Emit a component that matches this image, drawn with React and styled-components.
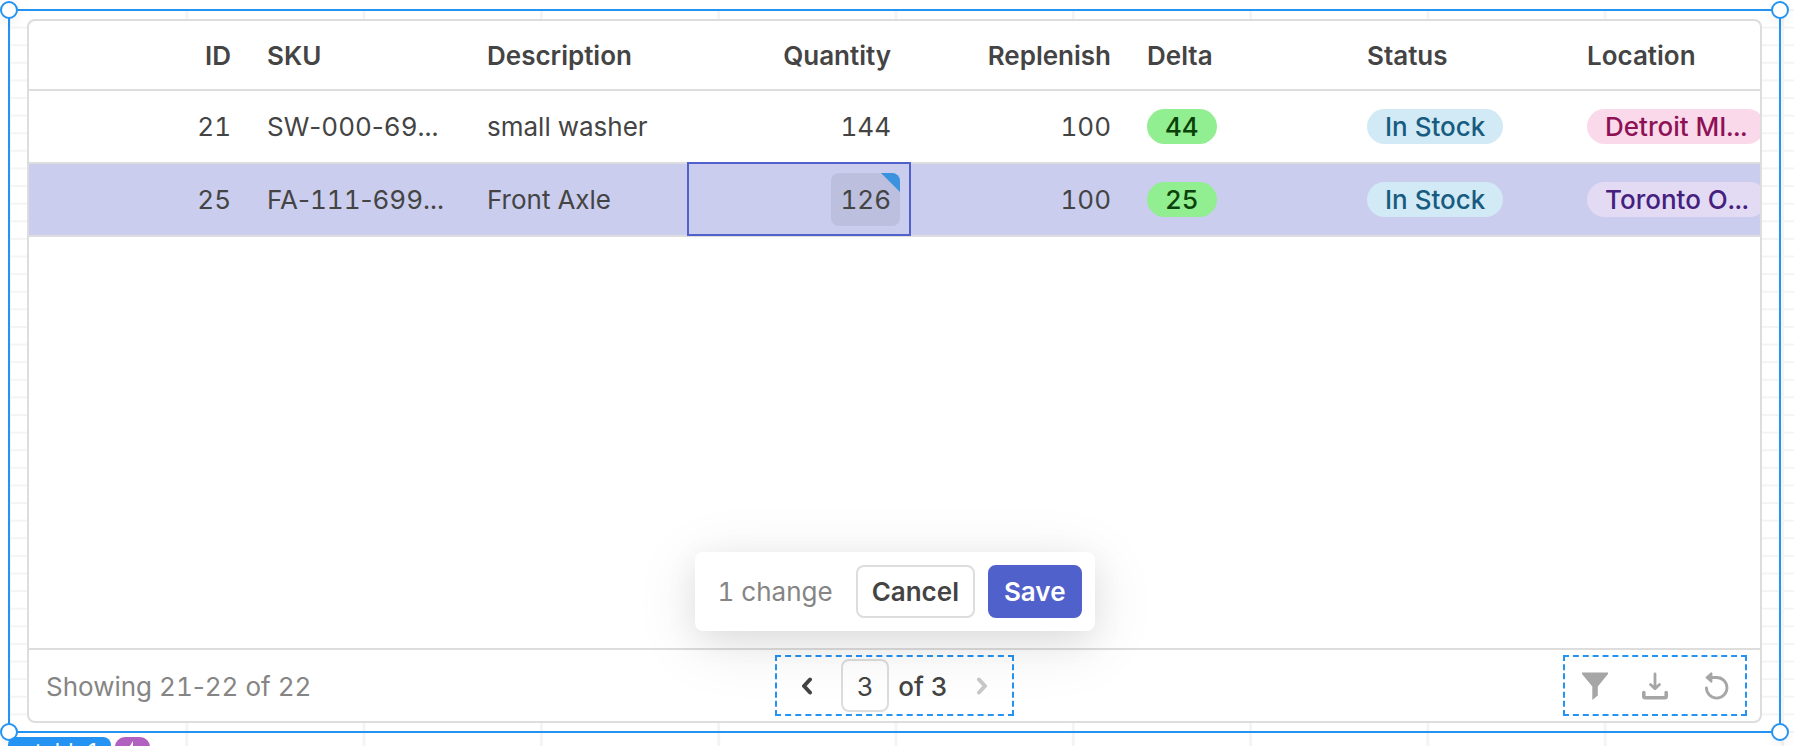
import React, { useState } from 'react';
import styled, { createGlobalStyle } from 'styled-components';

const GlobalStyle = createGlobalStyle`
    *, *::before, *::after {
        box-sizing: border-box;
    }
    body {
        margin: 0;
        overflow: hidden;
        background: #fff;
        color: #444;
        font-family: Inter, 'Liberation Sans', sans-serif;
        font-size: 26px;
        line-height: 36px;
        font-variant-numeric: tabular-nums;
    }
    button, input {
        font: inherit;
        color: inherit;
    }
`;

const Page = styled.main`
    display: flex;
    height: 100vh;
    padding: 9px 0 0 8px;
`;

const Canvas = styled.div`
    position: relative;
    display: flex;
    flex: 1;
    min-width: 0;
    padding: 0 13px 13px 0;
    background-image: linear-gradient(to right, #f4f4f4 3px, transparent 3px),
        linear-gradient(to bottom, #f4f4f4 2px, transparent 2px);
    background-size: calc((100% - 13px) / 10) 100%, 100% calc((100% - 15px) / 41);
`;

const Selection = styled.div`
    position: relative;
    display: flex;
    flex: 1;
    min-width: 0;
    padding: 8px 17px;
    border: 2px solid #2493f2;
`;

const Handle = styled.span`
    position: absolute;
    ${({ $y }) => $y}: -10px;
    ${({ $x }) => $x}: -10px;
    width: 18px;
    height: 18px;
    border: 2px solid #2493f2;
    border-radius: 50%;
    background: #fff;
    box-shadow: 0 4px 12px rgba(0, 0, 0, 0.06);
`;

const Widget = styled.section`
    position: relative;
    display: flex;
    flex-direction: column;
    flex: 1;
    min-width: 0;
    overflow: hidden;
    background: #fff;
    border: 2px solid #ddd;
    border-radius: 8px;
`;

const TableArea = styled.div`
    flex: 1;
    min-height: 0;
    overflow: hidden;
`;

const Table = styled.table`
    width: max-content;
    min-width: 100%;
    table-layout: fixed;
    border-collapse: separate;
    border-spacing: 0;
`;

const cellAlign = ({ $right }) => ($right ? 'right' : 'left');

const HeadCell = styled.th`
    width: 220px;
    height: 70px;
    padding: 2px 18px 0;
    border-bottom: 2px solid #ddd;
    font-weight: 600;
    text-align: ${cellAlign};
`;

const Row = styled.tr`
    background: ${({ $selected }) => ($selected ? '#cacdee' : '#fff')};
`;

const Cell = styled.td`
    position: relative;
    width: 220px;
    max-width: 220px;
    height: 73px;
    padding: 0 18px;
    border-bottom: 2px solid #ddd;
    text-align: ${cellAlign};
    white-space: nowrap;
`;

const ActiveOutline = styled.span`
    position: absolute;
    inset: -2px -2px -1px;
    z-index: 1;
    border: 2px solid #5161cb;
    pointer-events: none;
`;

const EditedValue = styled.div`
    position: relative;
    width: fit-content;
    margin: 0 -9px 0 auto;
    padding: 9px 9px 8px;
    overflow: hidden;
    background: #bcbfde;
    border-radius: 8px;

    &::after {
        content: '';
        position: absolute;
        top: 0;
        right: 0;
        width: 19px;
        height: 19px;
        background: #3b92de;
        clip-path: polygon(0 0, 100% 0, 100% 100%);
    }
`;

const tagColors = {
    green: ['#91ee91', '#0a420a'],
    blue: ['#d2e9f6', '#175c80'],
    pink: ['#fadaea', '#8e1156'],
    violet: ['#e3daf3', '#44207f'],
};

const Tag = styled.div`
    width: fit-content;
    height: 35px;
    padding: 0 18px;
    line-height: 35px;
    font-weight: 500;
    border-radius: 18px;
    background: ${({ $color }) => tagColors[$color][0]};
    color: ${({ $color }) => tagColors[$color][1]};
`;

const SaveBar = styled.div`
    position: absolute;
    bottom: 90px;
    left: 50%;
    z-index: 1;
    display: flex;
    align-items: center;
    gap: 13px;
    padding: 13px;
    transform: translateX(-50%);
    white-space: nowrap;
    background: #fff;
    border-radius: 8px;
    box-shadow: 0 12px 64px rgba(0, 0, 0, 0.1), 0 8px 32px rgba(0, 0, 0, 0.07);
`;

const ChangeCount = styled.span`
    padding: 0 10px;
    color: #858585;
`;

const Button = styled.button`
    height: 53px;
    padding: 0 14px;
    border: 2px solid ${({ $primary }) => ($primary ? '#5161cb' : '#ddd')};
    border-radius: 8px;
    background: ${({ $primary }) => ($primary ? '#5161cb' : '#fff')};
    color: ${({ $primary }) => ($primary ? '#fff' : '#444')};
    font-weight: 600;
`;

const Footer = styled.footer`
    display: grid;
    grid-template-columns: 1fr auto 1fr;
    align-items: center;
    padding: 5px 13px;
    border-top: 2px solid #ddd;
`;

const RowCount = styled.span`
    padding: 2px 0 0 4px;
    color: #858585;
`;

// Inter gives the hyphen a full digit width under tabular-nums
const Hyphen = styled.span`
    font-variant-numeric: normal;
`;

const DashedGroup = styled.div`
    display: flex;
    align-items: center;
    justify-self: ${({ $end }) => ($end ? 'end' : 'center')};
    height: 61px;
    border: 2px dashed #2493f2;
`;

const IconButton = styled.button`
    display: flex;
    align-items: center;
    justify-content: center;
    height: 53px;
    padding: 0;
    border: 0;
    background: none;
`;

const PageButton = styled(IconButton)`
    width: 64px;
    padding: ${({ $next }) => ($next ? '0 0 0 4px' : '0 4px 0 0')};
    color: ${({ $next }) => ($next ? '#c8c8c8' : '#444')};
`;

const ToolButton = styled(IconButton)`
    width: 60px;
    color: #a6a6a6;
`;

const PageInput = styled.input`
    width: 48px;
    height: 53px;
    padding: 2px 0 0;
    border: 2px solid #ddd;
    border-radius: 8px;
    background: transparent;
    text-align: center;
`;

const PageTotal = styled.span`
    padding: 2px 0 0 9px;
    font-weight: 500;
`;

const Badges = styled.div`
    position: absolute;
    top: calc(100% - 9px);
    left: 0;
    display: flex;
    gap: 4px;
    color: #fff;
    font-size: 22px;
    line-height: 28px;
`;

const NameBadge = styled.span`
    display: flex;
    align-items: center;
    gap: 9px;
    padding: 0 10px 0 9px;
    border-radius: 8px;
    background: #2493f2;
`;

const EventBadge = styled.span`
    display: flex;
    align-items: center;
    justify-content: center;
    width: 35px;
    border-radius: 10px;
    background: #b161bf;
`;

const columns = [
    { label: 'ID', right: true },
    { label: 'SKU' },
    { label: 'Description' },
    { label: 'Quantity', right: true },
    { label: 'Replenish', right: true },
    { label: 'Delta' },
    { label: 'Status' },
    { label: 'Location' },
];

const items = [
    {
        id: 21,
        sku: 'SW-000-69...',
        description: 'small washer',
        quantity: 144,
        replenish: 100,
        delta: 44,
        status: 'In Stock',
        location: 'Detroit MI...',
        locationColor: 'pink',
    },
    {
        id: 25,
        sku: 'FA-111-699...',
        description: 'Front Axle',
        quantity: 126,
        replenish: 100,
        delta: 25,
        status: 'In Stock',
        location: 'Toronto O...',
        locationColor: 'violet',
        edited: true,
    },
];

function Hyphenated({ text }) {
    return text.split('-').map((part, index) => (
        <React.Fragment key={index}>
            {index > 0 && <Hyphen>-</Hyphen>}
            {part}
        </React.Fragment>
    ));
}

function Chevron({ left }) {
    return (
        <svg width="12" height="18" viewBox="0 0 12 18" fill="none" aria-hidden="true">
            <path
                d={left ? 'M9 2.5 3 9l6 6.5' : 'M3 2.5 9 9l-6 6.5'}
                stroke="currentColor"
                strokeWidth="4"
                strokeLinecap="round"
                strokeLinejoin="round"
            />
        </svg>
    );
}

function FilterIcon() {
    return (
        <svg width="26" height="28" viewBox="0 0 26 28" aria-hidden="true">
            <path d="M0 .5h26v1.6L15.800 14.500v9L10.300 28V14.500L0 2.1z" fill="currentColor" />
        </svg>
    );
}

function DownloadIcon() {
    return (
        <svg
            width="26"
            height="28"
            viewBox="0 0 26 28"
            fill="none"
            stroke="currentColor"
            strokeLinecap="round"
            strokeLinejoin="round"
            aria-hidden="true"
        >
            <path d="M13 2v14M8.500 12.500 13 16.800l4.500-4.300" strokeWidth="2.800" />
            <path d="M1.800 20.500v3.700q0 1.500 1.500 1.500h19.400q1.500 0 1.500-1.500v-3.700" strokeWidth="3.600" />
        </svg>
    );
}

function ResetIcon() {
    return (
        <svg width="28" height="28" viewBox="0 0 28 28" fill="none" aria-hidden="true">
            <path
                d="M5.400 15.800A10.300 10.300 0 1 0 15.700 5.500H10"
                stroke="currentColor"
                strokeWidth="2.800"
                strokeLinecap="round"
            />
            <path d="M5.600 5.500 10.400 1.300v8.400z" fill="currentColor" stroke="currentColor" strokeWidth="2" strokeLinejoin="round" />
        </svg>
    );
}

function ItemRow({ item }) {
    return (
        <Row $selected={item.edited}>
            <Cell $right>{item.id}</Cell>
            <Cell>
                <Hyphenated text={item.sku} />
            </Cell>
            <Cell>{item.description}</Cell>
            <Cell $right>
                {item.edited ? <EditedValue>{item.quantity}</EditedValue> : item.quantity}
                {item.edited && <ActiveOutline />}
            </Cell>
            <Cell $right>{item.replenish}</Cell>
            <Cell>
                <Tag $color="green">{item.delta}</Tag>
            </Cell>
            <Cell>
                <Tag $color="blue">{item.status}</Tag>
            </Cell>
            <Cell>
                <Tag $color={item.locationColor}>{item.location}</Tag>
            </Cell>
        </Row>
    );
}

function App() {
    const [page, setPage] = useState('3');

    return (
        <Page>
            <GlobalStyle />
            <Canvas>
                <Selection>
                    <Widget>
                        <TableArea>
                            <Table>
                                <thead>
                                    <tr>
                                        {columns.map((column) => (
                                            <HeadCell key={column.label} $right={column.right}>
                                                {column.label}
                                            </HeadCell>
                                        ))}
                                    </tr>
                                </thead>
                                <tbody>
                                    {items.map((item) => (
                                        <ItemRow key={item.id} item={item} />
                                    ))}
                                </tbody>
                            </Table>
                        </TableArea>
                        <SaveBar>
                            <ChangeCount>1 change</ChangeCount>
                            <Button type="button">Cancel</Button>
                            <Button type="button" $primary>
                                Save
                            </Button>
                        </SaveBar>
                        <Footer>
                            <RowCount>
                                <Hyphenated text="Showing 21-22 of 22" />
                            </RowCount>
                            <DashedGroup>
                                <PageButton type="button" aria-label="Previous page">
                                    <Chevron left />
                                </PageButton>
                                <PageInput
                                    aria-label="Page"
                                    value={page}
                                    onChange={(e) => setPage(e.target.value)}
                                />
                                <PageTotal>of 3</PageTotal>
                                <PageButton type="button" $next aria-label="Next page">
                                    <Chevron />
                                </PageButton>
                            </DashedGroup>
                            <DashedGroup $end>
                                <ToolButton type="button" aria-label="Filter">
                                    <FilterIcon />
                                </ToolButton>
                                <ToolButton type="button" aria-label="Download">
                                    <DownloadIcon />
                                </ToolButton>
                                <ToolButton type="button" aria-label="Refresh">
                                    <ResetIcon />
                                </ToolButton>
                            </DashedGroup>
                        </Footer>
                    </Widget>
                    <Handle $y="top" $x="left" />
                    <Handle $y="top" $x="right" />
                    <Handle $y="bottom" $x="left" />
                    <Handle $y="bottom" $x="right" />
                </Selection>
                <Badges>
                    <NameBadge>
                        <svg width="9" height="9" viewBox="0 0 9 9" aria-hidden="true">
                            <path d="M1 1h7v7H1zM1 4.500h7" fill="none" stroke="#fff" strokeWidth="1.500" />
                        </svg>
                        table1
                    </NameBadge>
                    <EventBadge>
                        <svg width="14" height="20" viewBox="0 0 14 20" aria-hidden="true">
                            <path d="M8 0 1 11h5l-1 9 8-12H8z" fill="#fff" />
                        </svg>
                    </EventBadge>
                </Badges>
            </Canvas>
        </Page>
    );
}

export default App;
